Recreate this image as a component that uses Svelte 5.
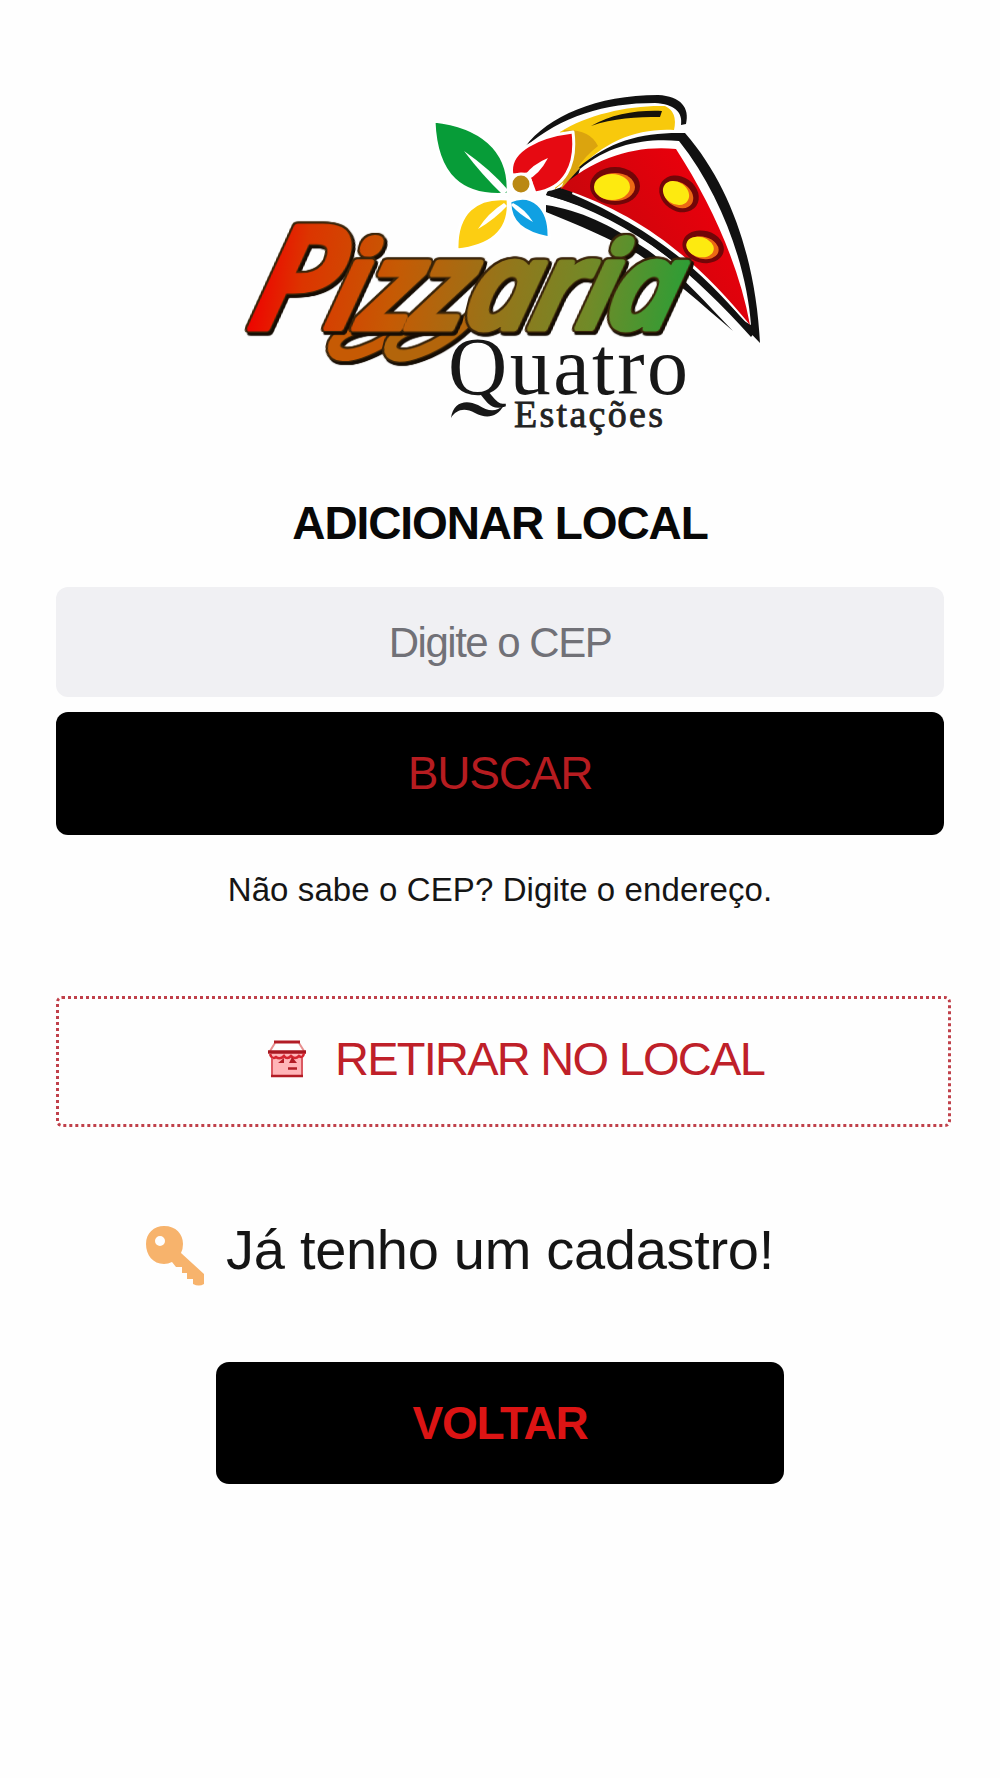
<script>
  let cep = $state('');

  const pepperoni = [
    { x: 612, y: 187, rx: 18, ry: 13, turn: 0 },
    { x: 676, y: 193, rx: 14, ry: 11, turn: 35 },
    { x: 700, y: 247, rx: 14, ry: 10, turn: 15 },
  ];
</script>

<main class="page">
  <svg class="logo" viewBox="230 80 540 370" role="img" aria-label="Pizzaria Quatro Estações">
    <defs>
      <linearGradient id="seasons" gradientUnits="userSpaceOnUse" x1="246" y1="20" x2="680" y2="-30">
        <stop offset="0" stop-color="#f00000" />
        <stop offset="0.12" stop-color="#dc3500" />
        <stop offset="0.33" stop-color="#c65a04" />
        <stop offset="0.56" stop-color="#977419" />
        <stop offset="0.78" stop-color="#718a28" />
        <stop offset="1" stop-color="#2c9e36" />
      </linearGradient>
      <linearGradient id="sauce" x1="0" y1="0.8" x2="0.8" y2="0.3">
        <stop offset="0.3" stop-color="#c8060c" />
        <stop offset="1" stop-color="#e8000c" />
      </linearGradient>
    </defs>

    <!-- crust -->
    <path fill="#111" d="M525 147C548 116 597 95 658 95C681 96 690 108 686 124L681 125C683 112 674 104 655 103C604 103 562 116 525 147Z" />
    <path fill="#f8c90c" d="M560 132C588 114 631 105 665 106Q678 112 674 130C638 128 603 141 577 172L555 189Z" />
    <path fill="#dba40e" d="M564 130Q590 129 598 146Q585 156 576 170L555 189Z" />
    <path fill="#17130a" d="M591 126C612 114 637 110 662 111L660 117C637 117 613 118 591 126Z" />

    <!-- slice -->
    <path fill="#111" d="M578 168C610 140 644 132 685 133C733 188 756 265 760 343C689 268 629 218 546 195L550 191L562 187Z" />
    <path fill="#fff" d="M580 169C610 144 646 138 679 141C723 196 747 270 751 325L744 321C697 265 646 226 572 194Z" />
    <path fill="#111" d="M548 190C626 210 687 259 755 332L751 337C686 265 625 215 546 195Z" />
    <path fill="url(#sauce)" d="M560 188C595 157 636 145 676 149C711 203 739 265 750 325C700 264 645 215 560 188Z" />
    <path fill="#dba40e" d="M561 189L571 161L580 168Z" />
    <path fill="#111" d="M546 205C580 210 612 226 640 245C676 268 702 299 733 331C701 304 671 276 638 254C610 239 579 225 546 212Z" />
    {#each pepperoni as p}
      <g transform="translate({p.x} {p.y}) rotate({p.turn})">
        <ellipse cx="3" cy="-1" rx={p.rx + 7} ry={p.ry + 6} fill="#720608" />
        <ellipse cx="3" rx={p.rx + 2} ry={p.ry + 1} fill="#ec6814" />
        <ellipse rx={p.rx} ry={p.ry} fill="#fdea10" />
      </g>
    {/each}

    <!-- four leaves -->
    <g stroke="#fff" stroke-width="3" stroke-linejoin="round">
      <path fill="#079c38" d="M434 121C478 126 511 148 508 194C462 198 436 176 434 121Z" />
      <path fill="#e60a12" d="M573 132C540 136 507 150 512 175L528 174L535 193C565 189 577 165 573 132Z" />
      <path fill="#fcce12" d="M457 250C456 213 476 196 508 199C511 230 493 246 457 250Z" />
      <path fill="#10a0e2" d="M510 201C532 192 550 207 549 238C524 233 509 223 510 201Z" />
    </g>
    <g fill="#fff">
      <path d="M464 151Q490 169 508 190L503 195Q482 175 464 151Z" />
      <path d="M548 158Q539 175 527 180L524 176Q533 164 548 158Z" />
      <path d="M478 229Q488 213 504 203L507 206Q495 219 478 229Z" />
      <path d="M513 203Q525 209 533 222Q520 215 511 205Z" />
    </g>
    <circle cx="521" cy="184" r="10" fill="#ba8814" stroke="#fff" stroke-width="3" />

    <!-- wordmark -->
    <g class="script" transform="translate(0 328) skewX(-14)">
      <path stroke="#c65a04" d="M392 0C369 -9 333 4 339 20C347 36 382 24 410 -7" />
      <path stroke="#b3650b" d="M447 0C425 -9 388 4 396 22C405 37 445 21 467 -9" />
      <text class="initial" x="246" y="0">P</text>
      <text x="324 357 409 461 528 575 603" y="0">izzaria</text>
    </g>
    <text class="quatro" x="448" y="394" textLength="240">Quatro</text>
    <path fill="#171717" d="M451 418C453 402 466 399 478 405C489 412 496 412 504 405C497 418 486 419 475 413C464 407 456 410 451 418Z" />
    <text class="estacoes" x="514" y="427" textLength="149">Estações</text>
  </svg>

  <h1>ADICIONAR LOCAL</h1>

  <form class="search" onsubmit={(e) => e.preventDefault()}>
    <input type="text" bind:value={cep} placeholder="Digite o CEP" aria-label="CEP" />
    <button class="btn buscar">BUSCAR</button>
  </form>

  <a class="address" href="#endereco">Não sabe o CEP? Digite o endereço.</a>

  <button class="pickup">
    <svg class="store" viewBox="0 0 40 38" fill="none">
      <path fill="#fff" stroke="#e89090" stroke-width="2" d="M8 3L3 11M32 3L37 11" />
      <path stroke="#b21c25" stroke-width="3" d="M7 2H33" />
      <path fill="#ffb5b8" d="M4 12H36V36H4Z" />
      <path stroke="#a81720" stroke-width="3.5" d="M1 12H39" />
      <path stroke="#d52530" stroke-width="2.5" d="M3 14Q5 20 9 17Q13 20 17 16Q20 20 24 16Q28 20 32 16Q36 19 37 13" />
      <path stroke="#db5961" stroke-width="2" d="M5 18V36M35 18V36" />
      <path fill="#b21c25" d="M11 23L17 18V23ZM22 23L25 17L30 23Z" />
      <path stroke="#b21c25" stroke-width="2.5" d="M21 28.500H30M4 36H36" />
    </svg>
    <span>RETIRAR NO LOCAL</span>
  </button>

  <a class="account" href="#entrar">
    <svg class="key" viewBox="0 0 58 60">
      <path fill="#f7b36c" fill-rule="evenodd" d="M18 0C30 0 37 8 37 18Q37 23 35 27L58 48V58Q53 61 47 58V53H41V47H36V41H30L26 36Q22 38 18 38C7 38 0 29 0 18S8 0 18 0ZM14 10A5 5 0 1 0 14 20A5 5 0 1 0 14 10Z" />
    </svg>
    <span>Já tenho um cadastro!</span>
  </a>

  <button class="btn voltar">VOLTAR</button>
</main>

<style>
  :global(body) {
    background: #fefefe;
  }

  .page {
    box-sizing: border-box;
    display: flex;
    flex-direction: column;
    align-items: center;
    width: 1000px;
    height: 1778px;
    padding-top: 80px;
    font-family: 'Liberation Sans', Arial, sans-serif;
    color: #111;
  }

  .logo {
    display: block;
    width: 540px;
    height: 370px;
    overflow: visible;
  }

  /* thin dark rim, then the offset shadow */
  .script text,
  .script path {
    filter: drop-shadow(1.5px 0 0 #3a2409) drop-shadow(-1.5px 0 0 #3a2409)
      drop-shadow(0 1.5px 0 #3a2409) drop-shadow(0 -1.5px 0 #3a2409)
      drop-shadow(3px 3px 0 #160d04);
  }

  .script text {
    font: italic 600 120px 'Open Sans', sans-serif;
    fill: url(#seasons);
    stroke: url(#seasons);
    stroke-width: 7;
    stroke-linejoin: round;
  }

  .script .initial { font-size: 140px; }

  .script path {
    fill: none;
    stroke-width: 12;
    stroke-linecap: round;
  }

  .quatro {
    font: 82px 'Liberation Serif', serif;
    fill: #171717;
  }

  .estacoes {
    font: 38px 'Liberation Serif', serif;
    fill: #222;
    stroke: #222;
    stroke-width: 0.8;
  }

  h1 {
    margin: 46px 0 0;
    font-size: 46px;
    line-height: 54px;
    letter-spacing: -1.1px;
    color: #080808;
  }

  .search {
    display: flex;
    flex-direction: column;
    gap: 15px;
    width: 888px;
    margin-top: 37px;
  }

  input {
    box-sizing: border-box;
    width: 100%;
    height: 110px;
    padding: 2px 20px 0;
    border: 0;
    border-radius: 12px;
    background: #f0f0f3;
    font: 42px 'Liberation Sans', Arial, sans-serif;
    letter-spacing: -1.5px;
    text-align: center;
  }

  input::placeholder {
    color: #717177;
    opacity: 1;
  }

  .btn {
    border: 0;
    border-radius: 12px;
    background: #000;
    font: 46px 'Liberation Sans', Arial, sans-serif;
  }

  .buscar {
    height: 123px;
    padding-bottom: 3px;
    letter-spacing: -1.2px;
    color: #b61c20;
  }

  .address {
    margin-top: 35px;
    font-size: 33px;
    line-height: 40px;
    letter-spacing: 0.1px;
    color: #151515;
    text-decoration: none;
  }

  .pickup {
    box-sizing: border-box;
    display: flex;
    align-items: center;
    gap: 28px;
    width: 895px;
    height: 131px;
    margin: 86px 0 0 7px;
    padding: 0 0 6px 208px;
    border: 3px dotted #c0404a;
    border-radius: 6px;
    background: transparent;
    font: 47px 'Liberation Sans', Arial, sans-serif;
    letter-spacing: -1.75px;
    color: #bf2029;
  }

  .store {
    width: 40px;
    height: 38px;
  }

  .account {
    display: flex;
    align-items: center;
    gap: 22px;
    margin: 87px 80px 0 0;
    font-size: 56px;
    line-height: 64px;
    letter-spacing: -0.3px;
    color: #151515;
    text-decoration: none;
  }

  .key {
    width: 58px;
    height: 60px;
    margin-top: 12px;
  }

  .voltar {
    width: 568px;
    height: 122px;
    margin-top: 76px;
    border-radius: 13px;
    font-weight: bold;
    letter-spacing: -1.2px;
    color: #dc1414;
  }
</style>
